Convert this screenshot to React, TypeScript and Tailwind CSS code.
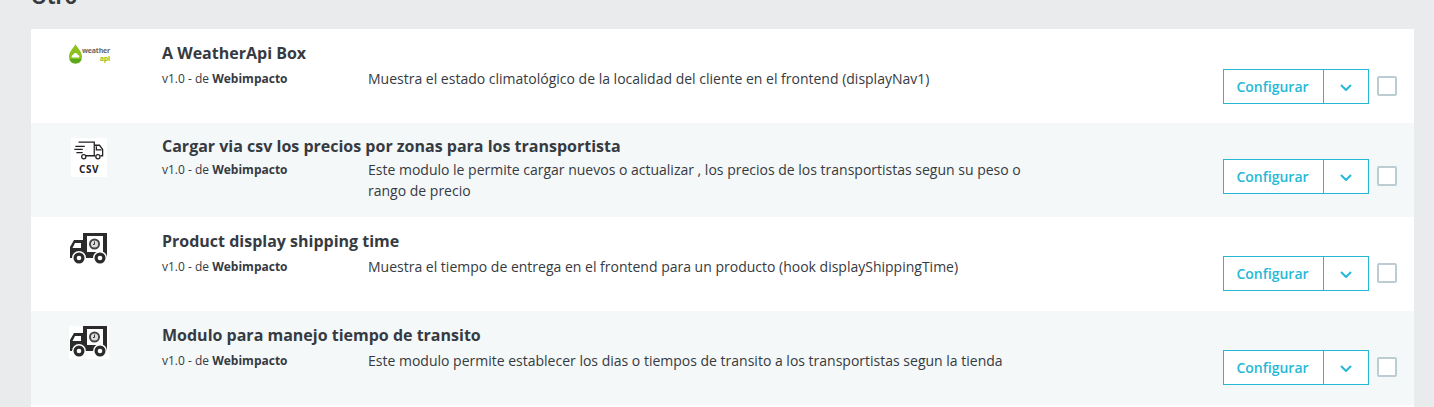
const modules = [
  {
    name: "A WeatherApi Box",
    desc: "Muestra el estado climatológico de la localidad del cliente en el frontend (displayNav1)",
    logo: "weather",
    alt: false,
    textTop: "pt-[13px]",
    subGap: "mt-[4px]",
    btnTop: "pt-[40px]",
  },
  {
    name: "Cargar via csv los precios por zonas para los transportista",
    desc: "Este modulo le permite cargar nuevos o actualizar , los precios de los transportistas segun su peso o rango de precio",
    logo: "csv",
    alt: true,
    textTop: "pt-[12px]",
    subGap: "mt-[2px]",
    btnTop: "pt-[36px]",
  },
  {
    name: "Product display shipping time",
    desc: "Muestra el tiempo de entrega en el frontend para un producto (hook displayShippingTime)",
    logo: "truck",
    alt: false,
    textTop: "pt-[13px]",
    subGap: "mt-[4px]",
    btnTop: "pt-[39px]",
  },
  {
    name: "Modulo para manejo tiempo de transito",
    desc: "Este modulo permite establecer los dias o tiempos de transito a los transportistas segun la tienda",
    logo: "truckBox",
    alt: true,
    textTop: "pt-[13px]",
    subGap: "mt-[4px]",
    btnTop: "pt-[39px]",
  },
]

function WeatherLogo() {
  return (
    <div className="-ml-[1px] flex items-start">
      <svg width="13" height="20" viewBox="0 0 13 20">
        <path d="M6.500 0C5.500 3 0 7 0 13a6.500 6.500 0 0 0 13 0C13 7 7.500 3 6.500 0Z" fill="#8cc21f" />
        <path d="M.3 15a6.500 6.500 0 0 0 12.400 0Z" fill="#5aa81c" />
        <path d="M3 13.500a1.500 1.500 0 0 1 1-2.500 2.600 2.600 0 0 1 5 0 1.500 1.500 0 0 1 1 2.500Z" fill="#fff" />
      </svg>
      <div className="mt-[3px] ml-[1px] flex w-[27px] flex-col items-end text-[7px] leading-[8px] font-bold tracking-[-0.2px]">
        <span className="text-[#666]">weather</span>
        <span className="text-[#8cc21f]">api</span>
      </div>
    </div>
  )
}

function CsvLogo() {
  return (
    <div className="ml-[1px] flex flex-col items-center bg-white px-[2px] pt-[2px] pb-[3px]">
      <svg width="32" height="21" viewBox="0 0 30 20" fill="none" stroke="#222" strokeWidth="1.200">
        <path d="M5 2h15v13H12" />
        <path d="M20 5h5l3 4v6h-2" />
        <path d="M20 15h1" />
        <path d="M22 6v3.500h5" />
        <path d="M2 6h9M1 9h8M3 12h6" />
        <circle cx="10" cy="16" r="2" />
        <circle cx="23.500" cy="16" r="2" />
      </svg>
      <span className="mt-[3px] text-[10px] leading-[10px] font-bold tracking-[0.6px] text-[#222]">CSV</span>
    </div>
  )
}

function TruckLogo() {
  return (
    <svg width="38" height="32" viewBox="0 0 38 32">
      <path d="M13 0h24v25H13ZM4 7h9v18H0V14Z" fill="#2b2b2b" />
      <path d="M5 10h6v5H2.500Z" fill="#fff" />
      <rect x="17" y="3" width="16" height="16" fill="#fff" />
      <circle cx="24.500" cy="11" r="5.500" fill="#444" />
      <circle cx="24.500" cy="11" r="3.600" fill="#ddd" />
      <path d="M24.500 8.500v3H23" stroke="#333" strokeWidth="1" fill="none" />
      <circle cx="9" cy="25" r="7" fill="#fff" />
      <circle cx="9" cy="25" r="5.500" fill="#2b2b2b" />
      <circle cx="9" cy="25" r="2.300" fill="#fff" />
      <circle cx="30" cy="25" r="7" fill="#fff" />
      <circle cx="30" cy="25" r="5.500" fill="#2b2b2b" />
      <circle cx="30" cy="25" r="2.300" fill="#fff" />
    </svg>
  )
}

export default function App() {
  return (
    <main className="h-[407px] overflow-hidden bg-[#eaebec] font-['Open_Sans',sans-serif] text-[#363a41]">
      <h2 className="-mt-[17px] h-[46px] pl-[31px] text-[20px] leading-[27px] font-bold">Otro</h2>
      <div className="mr-[20px] ml-[31px] bg-white">
        {modules.map((m) => (
          <div key={m.name} className={`flex h-[94px] ${m.alt ? "bg-[#f4f8f8]" : "bg-white"}`}>
            <div className="flex w-[131px] items-start pt-[15px] pl-[39px]">
              {m.logo === "weather" && <WeatherLogo />}
              {m.logo === "csv" && <CsvLogo />}
              {m.logo === "truck" && (
                <div className="mt-[1px]">
                  <TruckLogo />
                </div>
              )}
              {m.logo === "truckBox" && (
                <div className="-ml-[1px] bg-white px-[1px] pb-[1px]">
                  <TruckLogo />
                </div>
              )}
            </div>
            <div className={`w-[1061px] ${m.textTop}`}>
              <div className="text-[16px] leading-[22px] font-bold">{m.name}</div>
              <div className={`flex ${m.subGap}`}>
                <div className="w-[206px] text-[12px] leading-[21px]">
                  v1.0 - de <b>Webimpacto</b>
                </div>
                <p className="w-[665px] text-[14px] leading-[21px]">{m.desc}</p>
              </div>
            </div>
            <div className={`flex items-start ${m.btnTop}`}>
              <div className="flex h-[35px] w-[146px] border border-[#25b9d7] bg-white text-[#25b9d7]">
                <button className="w-[100px] border-r border-[#25b9d7] pr-[2px] text-[14px] font-semibold">Configurar</button>
                <button className="flex flex-1 items-center justify-center pt-[2px]">
                  <svg width="12" height="7" viewBox="0 0 12 7" fill="none" stroke="#25b9d7" strokeWidth="2">
                    <path d="M1 1l5 5 5-5" />
                  </svg>
                </button>
              </div>
              <div className="mt-[7px] ml-[8px] h-[20px] w-[20px] rounded-[2px] border-2 border-[#bbcdd2] bg-white" />
            </div>
          </div>
        ))}
        <div className="h-[10px] bg-white" />
      </div>
    </main>
  )
}
